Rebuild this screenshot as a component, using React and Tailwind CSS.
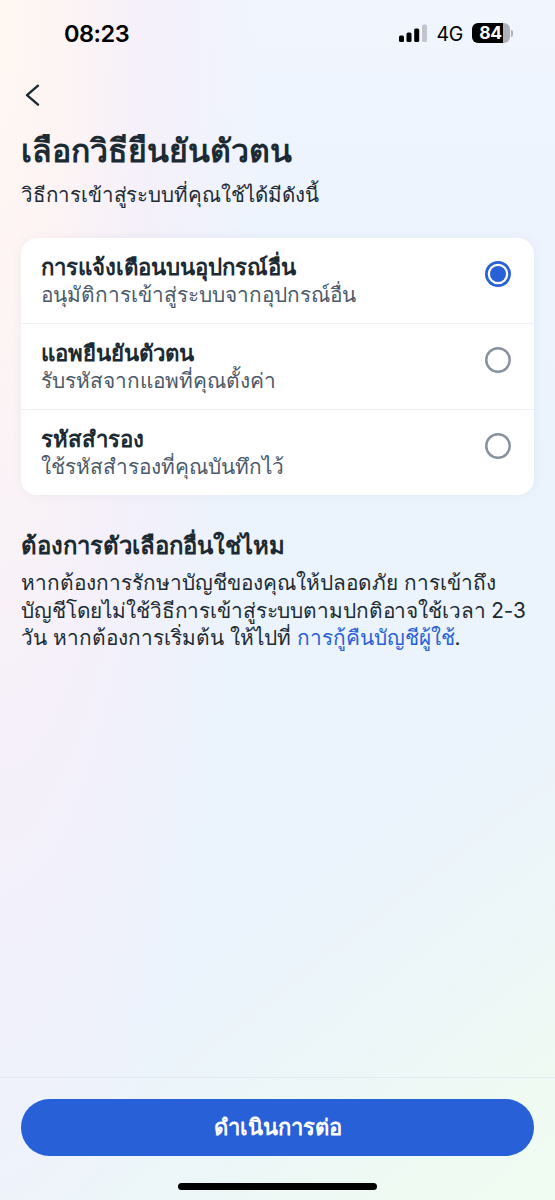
import { useState } from 'react';

const methods = [
  { id: 'push', title: 'การแจ้งเตือนบนอุปกรณ์อื่น', desc: 'อนุมัติการเข้าสู่ระบบจากอุปกรณ์อื่น' },
  { id: 'app', title: 'แอพยืนยันตัวตน', desc: 'รับรหัสจากแอพที่คุณตั้งค่า' },
  { id: 'backup', title: 'รหัสสำรอง', desc: 'ใช้รหัสสำรองที่คุณบันทึกไว้' },
];

const StatusBar = () => (
  <div className="flex h-[66px] items-center justify-between pl-[64px] pr-[42px] text-black">
    <span className="pt-[2px] text-[23.5px] font-semibold leading-none tracking-[-0.5px]">08:23</span>
    <div className="flex items-center">
      <svg width="28" height="18" viewBox="0 0 28 18">
        <rect x="0" y="11.5" width="5" height="6.5" rx="1.5" />
        <rect x="7.5" y="8.5" width="5" height="9.5" rx="1.5" />
        <rect x="15.2" y="4.5" width="5" height="13.5" rx="1.5" />
        <rect x="23" y="0.5" width="5" height="17.5" rx="1.5" fill="#c1c5cd" />
      </svg>
      <span className="ml-[9px] pt-[3px] text-[19.5px] leading-none tracking-[-0.3px]">4G</span>
      <div className="ml-[9px] flex h-[20px] w-[38px] items-center justify-center rounded-[6px] bg-[linear-gradient(90deg,#000_0_31px,#aeb2b8_31px)]">
        <span className="pr-[1px] text-[17.5px] font-bold leading-none tracking-[-0.4px] text-white">84</span>
      </div>
      <div className="ml-[1px] h-[7px] w-[2px] rounded-r-full bg-[#aeb2b8]" />
    </div>
  </div>
);

const Radio = ({ checked }) => (
  <span
    className={`flex h-[26px] w-[26px] items-center justify-center rounded-full ${checked ? 'shadow-[inset_0_0_0_2.7px_#2860d8]' : 'shadow-[inset_0_0_0_2.5px_#87929e]'}`}
  >
    {checked && <span className="h-4 w-4 rounded-full bg-[#2860d8]" />}
  </span>
);

function App() {
  const [selected, setSelected] = useState('push');

  return (
    <div className="flex h-[1200px] w-[555px] flex-col overflow-hidden bg-[radial-gradient(ellipse_260px_1350px_at_0_0,#fff8f2_0%,#fdf4f4_25%,#f5f0fa_55%,rgba(240,242,252,0)_100%),linear-gradient(142deg,rgba(236,243,251,0)_68%,#edf6f8_81%,#effaf3_92%,#f0fbf1_100%),linear-gradient(180deg,#f0f5fe_0%,#ebf3fc_40%,#ebf3fc_100%)] font-['Inter',sans-serif] text-[#1c2b33]">
      <StatusBar />

      <main className="flex-1 px-[21px]">
        <button className="mt-[17px] block" aria-label="Back">
          <svg width="24" height="24" viewBox="0 0 24 24" fill="none" stroke="currentColor" strokeWidth="2.4" strokeLinecap="round" strokeLinejoin="round">
            <path d="M17 2.7 6 12.2l11 9.5" />
          </svg>
        </button>

        <h1 className="mt-[24px] whitespace-nowrap text-[32px] font-bold leading-[40px]">เลือกวิธียืนยันตัวตน</h1>
        <p className="mt-[10px] whitespace-nowrap text-[20.5px] leading-[28px] tracking-[-0.06px]">วิธีการเข้าสู่ระบบที่คุณใช้ได้มีดังนี้</p>

        <div className="mt-[29px] divide-y divide-[#eef0f3] rounded-[16px] bg-white shadow-[0_0_12px_rgba(60,80,120,0.06)]">
          {methods.map((m) => (
            <button
              key={m.id}
              onClick={() => setSelected(m.id)}
              className="flex h-[86px] w-full items-start justify-between pl-[20px] pr-[23px] pt-[15px] text-left last:h-[85px]"
            >
              <span className="block whitespace-nowrap leading-[28px]">
                <span className="block text-[22.2px] font-bold">{m.title}</span>
                <span className="block text-[20.8px] text-[#4b5a68]">{m.desc}</span>
              </span>
              <span className="mt-[8px]">
                <Radio checked={selected === m.id} />
              </span>
            </button>
          ))}
        </div>

        <h2 className="mt-[36px] whitespace-nowrap text-[23.9px] font-bold leading-[30px]">ต้องการตัวเลือกอื่นใช่ไหม</h2>
        <p className="mt-[8px] whitespace-nowrap text-[20.8px] leading-[27.5px]">
          หากต้องการรักษาบัญชีของคุณให้ปลอดภัย การเข้าถึง
          <br />
          <span className="tracking-[-0.12px]">บัญชีโดยไม่ใช้วิธีการเข้าสู่ระบบตามปกติอาจใช้เวลา 2-3</span>
          <br />
          วัน หากต้องการเริ่มต้น ให้ไปที่ <a className="text-[#2860d8]">การกู้คืนบัญชีผู้ใช้</a>.
        </p>
      </main>

      <footer className="flex h-[123px] flex-col items-center border-t border-[#e3e9f1] px-[21px] pt-[21px]">
        <button className="h-[57px] w-full rounded-full bg-[#2860d8] text-[22px] font-bold text-white">ดำเนินการต่อ</button>
        <div className="mt-[27px] h-[7px] w-[199px] rounded-full bg-black" />
      </footer>
    </div>
  );
}

export default App;
